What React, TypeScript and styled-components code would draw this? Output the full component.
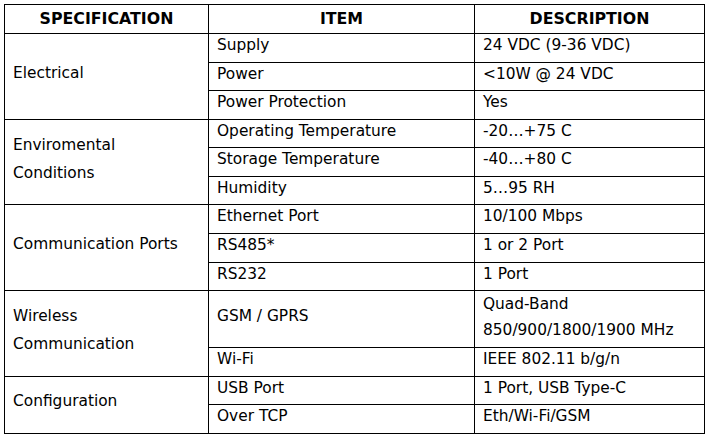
import React, { FC } from 'react';
import styled, { createGlobalStyle } from 'styled-components';

const GlobalStyle = createGlobalStyle`
  html, body {
    margin: 0;
    padding: 0;
    background: #fff;
  }
`;

interface SpecGroup {
  name: string[];
  rows: { item: string; desc: string[] }[];
}

const SPECS: SpecGroup[] = [
  {
    name: ['Electrical'],
    rows: [
      { item: 'Supply', desc: ['24 VDC (9-36 VDC)'] },
      { item: 'Power', desc: ['<10W @ 24 VDC'] },
      { item: 'Power Protection', desc: ['Yes'] },
    ],
  },
  {
    name: ['Enviromental', 'Conditions'],
    rows: [
      { item: 'Operating Temperature', desc: ['-20\u2026+75 C'] },
      { item: 'Storage Temperature', desc: ['-40\u2026+80 C'] },
      { item: 'Humidity', desc: ['5\u202695 RH'] },
    ],
  },
  {
    name: ['Communication Ports'],
    rows: [
      { item: 'Ethernet Port', desc: ['10/100 Mbps'] },
      { item: 'RS485*', desc: ['1 or 2 Port'] },
      { item: 'RS232', desc: ['1 Port'] },
    ],
  },
  {
    name: ['Wireless', 'Communication'],
    rows: [
      { item: 'GSM / GPRS', desc: ['Quad-Band', '850/900/1800/1900 MHz'] },
      { item: 'Wi-Fi', desc: ['IEEE 802.11 b/g/n'] },
    ],
  },
  {
    name: ['Configuration'],
    rows: [
      { item: 'USB Port', desc: ['1 Port, USB Type-C'] },
      { item: 'Over TCP', desc: ['Eth/Wi-Fi/GSM'] },
    ],
  },
];

const Page = styled.div`
  padding: 4px;
`;

const Table = styled.table`
  border-collapse: collapse;
  table-layout: fixed;
  width: 700px;
  font-family: 'DejaVu Sans', Verdana, sans-serif;
  color: #000;
`;

const HeadCell = styled.th`
  border: 1px solid #000;
  padding: 1px 8px 1px;
  font-size: 15.8px;
  line-height: 26px;
  font-weight: bold;
  text-align: center;
  vertical-align: middle;
`;

// row pitch is 28.57px: 23px line + 4.57px bottom padding + 1px border
const Cell = styled.td<{ $tight?: boolean }>`
  border: 1px solid #000;
  padding: 0 8px ${p => (p.$tight ? 4 : 4.57)}px;
  font-size: 15.4px;
  line-height: ${p => (p.$tight ? 26 : 23)}px;
  text-align: left;
  vertical-align: middle;
  white-space: nowrap;
`;

const GroupCell = styled(Cell)<{ $multi?: boolean }>`
  padding-bottom: 6px;
  line-height: ${p => (p.$multi ? 28 : 23)}px;
`;

const Lines: FC<{ lines: string[] }> = ({ lines }) => (
  <>
    {lines.map((l, i) => (
      <React.Fragment key={i}>
        {i > 0 && <br />}
        {l}
      </React.Fragment>
    ))}
  </>
);

export default function App() {
  return (
    <Page>
      <GlobalStyle />
      <Table>
        <colgroup>
          <col style={{ width: 204 }} />
          <col style={{ width: 266 }} />
          <col style={{ width: 230 }} />
        </colgroup>
        <thead>
          <tr>
            <HeadCell>SPECIFICATION</HeadCell>
            <HeadCell>ITEM</HeadCell>
            <HeadCell>DESCRIPTION</HeadCell>
          </tr>
        </thead>
        <tbody>
          {SPECS.map(group =>
            group.rows.map((row, i) => {
              const tight = row.desc.length > 1;
              return (
                <tr key={group.name.join() + row.item}>
                  {i === 0 && (
                    <GroupCell rowSpan={group.rows.length} $multi={group.name.length > 1}>
                      <Lines lines={group.name} />
                    </GroupCell>
                  )}
                  <Cell>{row.item}</Cell>
                  <Cell $tight={tight}>
                    <Lines lines={row.desc} />
                  </Cell>
                </tr>
              );
            }),
          )}
        </tbody>
      </Table>
    </Page>
  );
}
